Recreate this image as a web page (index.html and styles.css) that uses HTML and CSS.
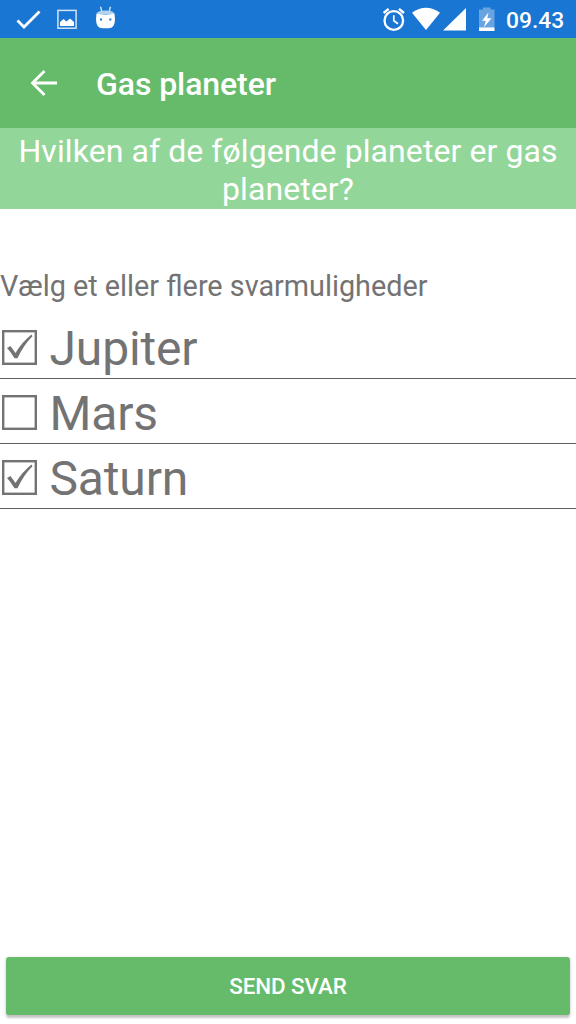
FILE: index.html
```html
<!DOCTYPE html>
<html lang="da">
<head>
<meta charset="utf-8">
<title>Gas planeter</title>
<link rel="stylesheet" href="styles.css">
</head>
<body>
<div class="screen">
  <div class="status">
    <svg class="status-left" width="144" height="38" viewBox="0 0 144 38">
      <path d="M17.500 20.500 24 27 39.500 11.500" fill="none" stroke="#fff" stroke-width="2.800"/>
      <rect x="57.900" y="10.400" width="18.200" height="17.800" fill="none" stroke="#d2e4f6" stroke-width="1.500"/>
      <path d="M60 26V22L63.500 19 66.500 21.500 70 18.500 74 22V26Z" fill="#fff"/>
      <path d="M100.500 6.800 102 12M110.500 6.800 109 12" stroke="#d2e4f6" stroke-width="1.400"/>
      <path d="M96.500 13.500Q98 10.500 105.500 10.500T114.500 13.500Q113 14 105.500 14T96.500 13.500Z" fill="#b5d2f1"/>
      <path d="M96.500 13.500Q105.500 15.500 114.500 13.500L115 19Q115 28.300 108.500 28.300H102.500Q96 28.300 96 19Z" fill="#fff"/>
      <path d="M100 18.500h2v2h-2zM109.300 18.500h2v2h-2z" fill="#1976d2"/>
    </svg>
    <svg class="status-right" width="130" height="38" viewBox="370 0 130 38">
      <g fill="none" stroke="#fff">
        <circle cx="393.800" cy="20.500" r="9.300" stroke-width="2.300"/>
        <path d="M393.800 15.300V20.800L398 23.800" stroke-width="1.700"/>
        <path d="M383.600 13 388.600 8.800M399 8.800 404 13" stroke-width="2.400"/>
      </g>
      <path d="M412 12.700Q426 2.700 440 12.700L426 30Z" fill="#fff"/>
      <path d="M443 30.500 466 8V30.500Z" fill="#fff"/>
      <path d="M479 9.500H483V7.500H490.500V9.500H494.500V27H479Z" fill="#68a4e1"/>
      <path d="M479 27.300H494.500V31H479Z" fill="#fff"/>
      <path d="M488.500 12.500 482 20.800H485.700L484 27.300 491.500 18.300H487.300Z" fill="#fff"/>
    </svg>
    <span class="clock">09.43</span>
  </div>
  <header class="appbar">
    <svg class="back" width="28" height="28" viewBox="0 0 28 28"><path d="M27 14H3M14.500 2 2.500 14 14.500 26" fill="none" stroke="#fff" stroke-width="2.800"/></svg>
    <h1 class="title">Gas planeter</h1>
  </header>
  <p class="question">Hvilken af de følgende planeter er gas planeter?</p>
  <main class="answers">
    <p class="hint">Vælg et eller flere svarmuligheder</p>
    <div class="option">
      <svg class="box" width="35" height="35" viewBox="0 0 35 35"><rect x="1.200" y="1.200" width="32.600" height="32.600" fill="none" stroke="#737373" stroke-width="2.400"/><path d="M5 18 8.500 16 13.500 23Q20 12 29.500 4.500L30.500 6.200Q21.500 15 15.500 28.300H12.500Q8.500 21.500 5 18Z" fill="#737373"/></svg>
      <span class="name">Jupiter</span>
    </div>
    <div class="option">
      <svg class="box" width="35" height="35" viewBox="0 0 35 35"><rect x="1.200" y="1.200" width="32.600" height="32.600" fill="none" stroke="#737373" stroke-width="2.400"/></svg>
      <span class="name">Mars</span>
    </div>
    <div class="option">
      <svg class="box" width="35" height="35" viewBox="0 0 35 35"><rect x="1.200" y="1.200" width="32.600" height="32.600" fill="none" stroke="#737373" stroke-width="2.400"/><path d="M5 18 8.500 16 13.500 23Q20 12 29.500 4.500L30.500 6.200Q21.500 15 15.500 28.300H12.500Q8.500 21.500 5 18Z" fill="#737373"/></svg>
      <span class="name">Saturn</span>
    </div>
  </main>
  <button class="send">SEND SVAR</button>
</div>
</body>
</html>
```
FILE: styles.css
```css
* { box-sizing: border-box; }
body { margin: 0; background: #fff; font-family: Roboto, sans-serif; }
.screen { width: 576px; height: 1024px; display: flex; flex-direction: column; overflow: hidden; }
.status { height: 38px; flex: none; background: #1976d2; display: flex; align-items: center; }
.status-right { margin-left: auto; }
.clock { width: 76px; padding: 3px 0 0 6px; color: #fff; font-size: 22.8px; font-weight: 500; line-height: 36px; white-space: nowrap; }
.appbar { height: 90px; flex: none; background: #66bb6a; display: flex; align-items: center; padding-left: 30px; }
.back { margin-right: 38px; }
.title { margin: 1px 0 0; color: #fff; font-size: 32px; font-weight: 500; line-height: 38px; letter-spacing: -.08px; }
.question { margin: 0; height: 81px; flex: none; padding: 4px 10px 0; background: #93d699; color: #fff; font-size: 32px; line-height: 38px; letter-spacing: .08px; text-align: center; }
.answers { flex: 1; padding-top: 60px; color: #737373; }
.hint { margin: 0; font-size: 28.8px; line-height: 34px; }
.option { height: 65px; display: flex; align-items: flex-end; border-bottom: 1px solid #606060; }
.hint + .option { height: 76px; }
.box { margin: 0 0 13px 2px; }
.name { margin-left: 12.500px; font-size: 48px; line-height: 58px; letter-spacing: -.15px; }
.send { height: 58px; flex: none; margin: 0 6px 9px; border: 0; border-radius: 3px; background: #66bb6a; color: #fff; font: 500 22.4px/26px Roboto, sans-serif; letter-spacing: -.1px; padding: 0; box-shadow: 0 3px 2px rgba(0,0,0,.18), 0 1px 4px rgba(0,0,0,.12); }
```
